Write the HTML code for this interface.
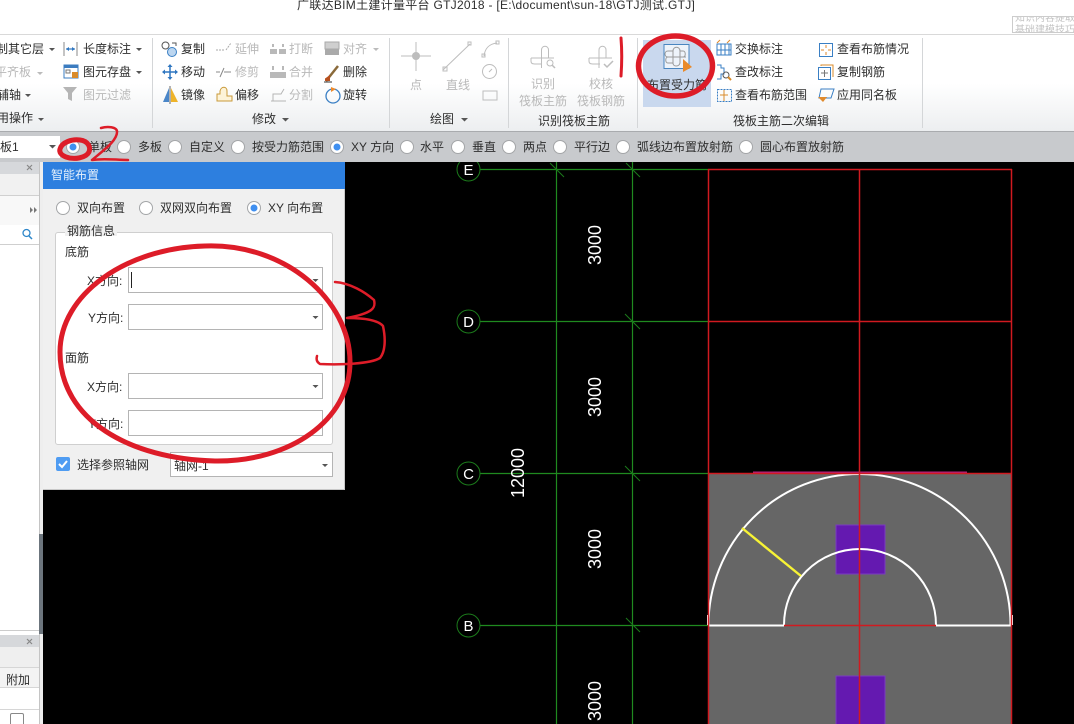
<!DOCTYPE html>
<html lang="zh"><head><meta charset="utf-8"><title>GTJ2018</title>
<style>
html,body{margin:0;padding:0;background:#fff}
#p{position:relative;width:1074px;height:724px;overflow:hidden;background:#000;font:12px/16px "Liberation Sans","Noto Sans CJK SC",sans-serif;color:#2e2e2e}
#p div{position:absolute;box-sizing:border-box}
#p span{position:absolute;white-space:nowrap;line-height:16px}
.g{color:#b9b9b9}
svg{position:absolute;left:0;top:0}
.inp{background:#fff;border:1px solid #b4b4b4}
</style></head><body><div id="p">
<div style="left:0;top:0;width:1074px;height:35px;background:#fff;border-bottom:1px solid #d9d9d9"></div>
<div style="left:0;top:35px;width:1074px;height:97px;background:linear-gradient(#fff 0,#fff 50%,#eceef0 100%)"></div>
<div style="left:0;top:131px;width:1074px;height:31px;background:#c8cacd;border-top:1px solid #a9abae"></div>
<div style="left:0;top:162px;width:39px;height:562px;background:#fff"></div>
<div style="left:39px;top:162px;width:4px;height:562px;background:#eeeeee;border-left:1px solid #c4c4c4"></div>
<div style="left:39px;top:534px;width:4px;height:100px;background:#6c757d"></div>
<div style="left:0;top:162px;width:39px;height:12px;background:#d6d8db"></div>
<div style="left:0;top:174px;width:39px;height:22px;background:#f1f1f1;border-bottom:1px solid #d0d0d0"></div>
<div style="left:0;top:196px;width:39px;height:29px;background:#f8f8f8"></div>
<div style="left:0;top:225px;width:39px;height:20px;background:#fff;border-bottom:1px solid #cfcfcf"></div>
<div style="left:0;top:630px;width:39px;height:5px;background:#fff;border-top:1px solid #ccc"></div>
<div style="left:0;top:635px;width:39px;height:12px;background:#d6d8db"></div>
<div style="left:0;top:647px;width:39px;height:21px;background:#efefef;border-bottom:1px solid #d6d6d6"></div>
<div style="left:0;top:668px;width:39px;height:20px;background:#f3f3f3;border-bottom:1px solid #d6d6d6"></div>
<div style="left:0;top:709px;width:39px;height:1px;background:#d6d6d6"></div>
<div style="left:10px;top:713px;width:14px;height:14px;background:#fff;border:1px solid #888;border-radius:2px"></div>
<span style="left:6px;top:672px">附加</span>
<div style="left:643px;top:40px;width:68px;height:67px;background:#c9d8ee"></div>
<div style="left:0;top:136px;width:60px;height:22px;background:#fff"></div>

<span style="left:297px;top:-3px;font-size:12px;letter-spacing:.29px">广联达BIM土建计量平台 GTJ2018 - [E:\document\sun-18\GTJ测试.GTJ]</span>

<span style="left:-4px;top:41px">制其它层</span><span class="g" style="left:-5px;top:64px">平齐板</span><span style="left:-3px;top:87px">辅轴</span><span style="left:-3px;top:110px">用操作</span>
<span style="left:83px;top:41px">长度标注</span><span style="left:83px;top:64px">图元存盘</span><span class="g" style="left:83px;top:87px">图元过滤</span>
<span style="left:181px;top:41px">复制</span><span style="left:181px;top:64px">移动</span><span style="left:181px;top:87px">镜像</span>
<span class="g" style="left:235px;top:41px">延伸</span><span class="g" style="left:235px;top:64px">修剪</span><span style="left:235px;top:87px">偏移</span>
<span class="g" style="left:289px;top:41px">打断</span><span class="g" style="left:289px;top:64px">合并</span><span class="g" style="left:289px;top:87px">分割</span>
<span class="g" style="left:343px;top:41px">对齐</span><span style="left:343px;top:64px">删除</span><span style="left:343px;top:87px">旋转</span>
<span style="left:252px;top:111px">修改</span>
<span class="g" style="left:410px;top:77px">点</span><span class="g" style="left:446px;top:77px">直线</span><span style="left:430px;top:111px">绘图</span>
<span class="g" style="left:531px;top:76px">识别</span><span class="g" style="left:519px;top:93px">筏板主筋</span>
<span class="g" style="left:589px;top:76px">校核</span><span class="g" style="left:577px;top:93px">筏板钢筋</span>
<span style="left:538px;top:113px">识别筏板主筋</span>
<span style="left:647px;top:77px">布置受力筋</span>
<span style="left:735px;top:41px">交换标注</span><span style="left:735px;top:64px">查改标注</span><span style="left:735px;top:87px">查看布筋范围</span>
<span style="left:837px;top:41px">查看布筋情况</span><span style="left:837px;top:64px">复制钢筋</span><span style="left:837px;top:87px">应用同名板</span>
<span style="left:733px;top:113px">筏板主筋二次编辑</span>

<span style="left:0;top:139px">板1</span>
<span style="left:88px;top:139px">单板</span><span style="left:138px;top:139px">多板</span><span style="left:189px;top:139px">自定义</span><span style="left:252px;top:139px">按受力筋范围</span><span style="left:351px;top:139px">XY 方向</span><span style="left:420px;top:139px">水平</span><span style="left:472px;top:139px">垂直</span><span style="left:523px;top:139px">两点</span><span style="left:574px;top:139px">平行边</span><span style="left:637px;top:139px">弧线边布置放射筋</span><span style="left:760px;top:139px">圆心布置放射筋</span>

<!-- CAD -->
<svg width="1074" height="724" viewBox="0 0 1074 724" fill="none">
<defs><clipPath id="cad"><rect x="43" y="162" width="1031" height="562"/></clipPath></defs>
<g clip-path="url(#cad)">
<rect x="708.500" y="473" width="303" height="251" fill="#666"/>
<rect x="836" y="525" width="49" height="49" fill="#6419b0" stroke="#7a3cc0"/>
<rect x="836" y="676" width="49" height="49" fill="#6419b0" stroke="#7a3cc0"/>
<g stroke="#1f8a1f" stroke-width="1.200">
<path d="M480 169.500H708M480 321.500H708M480 473.500H708M480 625.500H708M556.500 162V724M632.500 162V724"/>
</g>
<g stroke="#1b7a1b" stroke-width="1">
<path d="M550 163L564 177M626 163L640 177M625 314L640 329M625 466L640 481M626 618L640 632"/>
<circle cx="468.500" cy="169.500" r="11.500"/><circle cx="468.500" cy="321.500" r="11.500"/><circle cx="468.500" cy="473.500" r="11.500"/><circle cx="468.500" cy="625.500" r="11.500"/>
</g>
<path d="M753 472.500H967" stroke="#b3207d" stroke-width="2"/>
<g stroke="#fff" stroke-width="2">
<path d="M708.500 625A151 151 0 0 1 1010.500 625"/>
<path d="M784 625A76 76 0 0 1 936 625"/>
</g>
<path d="M708 625.500H784M936 625.500H1011" stroke="#fff" stroke-width="2"/>
<path d="M707.500 615V625M1012.500 615V625" stroke="#fff"/>
<path d="M742 528L801 576" stroke="#f7f335" stroke-width="2.400"/>
<g stroke="#d01a20" stroke-width="1.500">
<path d="M708.500 169V724M859.500 169V724M1011.500 169V724M708 169.500H1012M708 321.500H1012M708 473.500H1012M784 625.500H936"/>
</g>
<g fill="#fff" font-family="Liberation Sans,sans-serif" text-anchor="middle">
<text x="468.500" y="175" font-size="15">E</text><text x="468.500" y="327" font-size="15">D</text><text x="468.500" y="479" font-size="15">C</text><text x="468.500" y="631" font-size="15">B</text>
<g font-size="18">
<text transform="translate(601 245) rotate(-90)">3000</text>
<text transform="translate(601 397) rotate(-90)">3000</text>
<text transform="translate(601 549) rotate(-90)">3000</text>
<text transform="translate(601 701) rotate(-90)">3000</text>
<text transform="translate(524 473) rotate(-90)">12000</text>
</g></g></g>
</svg>

<!-- dialog -->
<div style="left:43px;top:162px;width:302px;height:328px;background:#f0f0f0;border-right:1px solid #c8c8c8;border-bottom:1px solid #c8c8c8"></div>
<div style="left:43px;top:162px;width:302px;height:27px;background:#2d7fdf"></div>
<span style="left:51px;top:167px;color:#e6f0fb">智能布置</span>
<span style="left:77px;top:200px">双向布置</span><span style="left:160px;top:200px">双网双向布置</span><span style="left:268px;top:200px">XY 向布置</span>
<div style="left:55px;top:232px;width:278px;height:213px;background:#fff;border:1px solid #cfcfcf;border-radius:3px"></div>
<div style="left:65px;top:226px;width:52px;height:10px;background:#f0f0f0"></div>
<span style="left:67px;top:223px">钢筋信息</span>
<span style="left:65px;top:244px">底筋</span><span style="left:65px;top:350px">面筋</span>
<span style="left:87px;top:273px">X方向:</span><span style="left:88px;top:310px">Y方向:</span><span style="left:87px;top:379px">X方向:</span><span style="left:88px;top:416px">Y方向:</span>
<div class="inp" style="left:128px;top:267px;width:195px;height:26px"></div>
<div class="inp" style="left:128px;top:304px;width:195px;height:26px"></div>
<div class="inp" style="left:128px;top:373px;width:195px;height:26px"></div>
<div class="inp" style="left:128px;top:410px;width:195px;height:26px"></div>
<div style="left:131px;top:272px;width:1px;height:16px;background:#222"></div>
<div style="left:56px;top:457px;width:14px;height:14px;background:#4f9cf2;border-radius:2px"></div>
<span style="left:77px;top:457px">选择参照轴网</span>
<div class="inp" style="left:170px;top:452px;width:163px;height:25px"></div>
<span style="left:174px;top:458px">轴网-1</span>

<!-- icons and vector overlay -->
<svg width="1074" height="724" viewBox="0 0 1074 724" fill="none">
<path d="M152.500 38V128M389.500 38V128M508.500 38V128M637.500 38V128M922.500 38V128" stroke="#d4d6d8"/>
<g fill="#555">
<path d="M49 48h6l-3 3zM136 48h6l-3 3zM25 94h6l-3 3zM38 118h6l-3 3zM136 71h6l-3 3zM282 118h7l-3.500 3.500zM461 118h7l-3.500 3.500zM49 145h7l-3.500 3.500z"/>
<path d="M312.500 316h6l-3 3zM312.500 385h6l-3 3zM312.500 279h6l-3 3zM322 464h6l-3 3z"/>
</g>
<path d="M37 72h6l-3 3zM373 48h6l-3 3z" fill="#bbb"/>
<g stroke="#888" stroke-width="1.200"><path d="M27 165l5 5M32 165l-5 5M27 639l5 5M32 639l-5 5"/></g>
<path d="M30 207l3 3-3 3zM34 207l3 3-3 3z" fill="#777"/>
<circle cx="26.500" cy="233" r="3.500" stroke="#2d86c9" stroke-width="1.300"/><path d="M29 236l3 3" stroke="#2d86c9" stroke-width="1.500"/>
<path d="M64 42V56M77 42V56" stroke="#888"/><path d="M66 49H75" stroke="#2f76c0" stroke-width="1.200"/><path d="M66 49l3-2v4zM75 49l-3-2v4z" fill="#2f76c0"/>
<rect x="64" y="65" width="14" height="13" stroke="#3b7cc0" fill="#fff"/><rect x="64" y="65" width="14" height="3" fill="#3b7cc0"/><rect x="66" y="70" width="4" height="3" stroke="#777"/><rect x="72" y="72" width="6" height="6" fill="#d98b2b"/>
<path d="M63 87H77L72 93V101L68 99V93Z" fill="#b5b5b5"/>
<circle cx="165.500" cy="45.500" r="3.500" stroke="#555"/><circle cx="172" cy="52" r="4.500" stroke="#3a7fc4" fill="#bcd6f0"/><path d="M172 43h4v3" stroke="#555"/>
<path d="M170 65v14M163 72h14" stroke="#2f76c0" stroke-width="1.500"/><path d="M170 64l-2.500 3h5zM170 80l-2.500-3h5zM162 72l3-2.500v5zM178 72l-3-2.500v5z" fill="#2f76c0"/>
<path d="M169 88L163 102H169Z" fill="#4a86c8"/><path d="M171 88L178 102H171Z" fill="#eeb32a"/><path d="M170 86V104" stroke="#666"/>
<path d="M216 50h8M226 50l5-7" stroke="#aaa" stroke-dasharray="2 1"/>
<path d="M216 72h4M224 72h7M220 77l4-9" stroke="#888"/>
<path d="M217 101h15v-5h-5v-5c0-5-6-5-7 0v3h-3z" stroke="#c99a3a" fill="#fdf3d8"/>
<g fill="#b9b9b9"><rect x="270" y="49" width="7" height="5"/><rect x="279" y="49" width="7" height="5"/><rect x="270" y="72" width="16" height="6"/><path d="M272 44h2v3h-2zM282 44h2v3h-2zM272 66h2v4h-2zM282 66h2v4h-2z"/></g>
<path d="M271 101h15M273 101v-7h8l3-5" stroke="#b5b5b5"/>
<rect x="325" y="42" width="14" height="7" fill="#cfcfcf" stroke="#aaa"/><rect x="325" y="49" width="14" height="6" fill="#aaa"/>
<path d="M326 81l12-15" stroke="#8a6a3a" stroke-width="2.500"/><path d="M329 77l-3 2v1h3z" fill="#b8501e" stroke="#b8501e" stroke-width="2"/><path d="M324 82h8" stroke="#333"/>
<circle cx="333" cy="96" r="7" stroke="#3a7fc4" stroke-width="1.300"/><path d="M331 87l5 2-5 3z" fill="#ef8b2c"/>
<g stroke="#bdbdbd">
<path d="M416 42V71M401 56H431M443 70L470 44"/><rect x="443" y="67" width="4" height="4"/><rect x="468" y="42" width="3" height="3"/>
<path d="M484 56c1-8 5-12 13-13"/><rect x="482" y="54" width="3" height="3"/><rect x="496" y="41" width="3" height="3"/>
<circle cx="489.500" cy="71.500" r="7"/><path d="M489 72l3-3"/>
<rect x="483" y="91" width="14" height="9"/>
<path d="M541.500 68V50c0-5 7-5 7 0v8M531 58H554M531 58v3c0 3 2 3 5 3h6"/>
<path d="M599 68V50c0-5 7-5 7 0v8M589 58H612M589 58v3c0 3 2 3 5 3h6"/>
<circle cx="550" cy="63" r="3"/><path d="M552 65l3 3M604 64l3 3 6-6" stroke-width="1.500"/>
</g>
<circle cx="416" cy="56" r="4" fill="#bdbdbd"/>
<rect x="664" y="44.500" width="25" height="24" fill="#eef3fa" stroke="#4a86c0"/>
<path d="M673 64V51c0-5 7-5 7 0v6M668 57H686M668 57c-4 0-4-6 0-6h5M668 57c-3 0-3 6 0 6h5c0 4 6 4 7 0v-6h3c3 0 3-6 0-6h-3" stroke="#9a9a9a" fill="none"/>
<path d="M683 59L692 67L683 72Z" fill="#e98a2a"/>
<path d="M717 50h14v-6h-14zM717 50h14v5h-14zM721 44v11M725 44v11M729 44v11" stroke="#3a7fc4"/><path d="M717 43l3-3M727 43l3-3" stroke="#e08a2c"/>
<path d="M717 65h4v3h3v6h-3v5h-4" stroke="#3a7fc4"/><circle cx="726" cy="75" r="3" stroke="#555"/><path d="M728 77l3 3" stroke="#d98b2b" stroke-width="2"/>
<rect x="717.500" y="89.500" width="14" height="12" stroke="#3a7fc4" stroke-dasharray="2 1"/><path d="M724 90v11M720 95h8" stroke="#d98b2b"/>
<rect x="819.500" y="43.500" width="13" height="13" stroke="#3a7fc4"/><path d="M826 45v3M826 52v3M821 50h3M828 50h3" stroke="#e08a2c"/>
<rect x="818.500" y="67.500" width="12" height="12" stroke="#3a7fc4"/><path d="M821 66v-1h12v12" stroke="#d98b2b"/><path d="M824.500 70v7M821 73h7" stroke="#777"/>
<path d="M821 89h13l-3 9h-12z" stroke="#3a7fc4"/><path d="M818 97h9l-4 5z" fill="#e08a2c"/>
<g fill="#fff" stroke="#a4a6a8">
<circle cx="73" cy="147" r="6.500"/><circle cx="124" cy="147" r="6.500"/><circle cx="175" cy="147" r="6.500"/><circle cx="238" cy="147" r="6.500"/><circle cx="337" cy="147" r="6.500"/><circle cx="407" cy="147" r="6.500"/><circle cx="458" cy="147" r="6.500"/><circle cx="509" cy="147" r="6.500"/><circle cx="560" cy="147" r="6.500"/><circle cx="623" cy="147" r="6.500"/><circle cx="746" cy="147" r="6.500"/>
<circle cx="63" cy="208" r="6.500"/><circle cx="146" cy="208" r="6.500"/><circle cx="254" cy="208" r="6.500"/>
</g>
<g fill="#3f8ff0"><circle cx="73" cy="147" r="3.500"/><circle cx="337" cy="147" r="3.500"/><circle cx="254" cy="208" r="3.500"/></g>
<path d="M59 464l3 3 5-6" stroke="#fff" stroke-width="2"/>
<g stroke="#dd1c28" stroke-linecap="round" stroke-linejoin="round">
<ellipse cx="675.500" cy="66" rx="37" ry="30" stroke-width="5.500"/>
<path d="M621 38C622 50 622 62 621 76" stroke-width="3"/>
<path d="M60 149C62 142 72 139 80 140C88 141 91 147 89 152C86 158 74 160 66 157C61 155 59 152 60 149Z" stroke-width="5"/>
<path d="M101 128C108 126 116 127 117 131C118 140 104 150 92 160C104 158 116 160 128 160" stroke-width="2.500"/>
<path d="M205 246C285 243 350 300 350 362C350 420 290 462 215 461C130 459 60 420 60 352C60 295 125 248 205 246Z" stroke-width="5"/>
<path d="M335 282C350 283 365 292 374 300C376 308 373 313 347 318C365 318 378 320 383 326C386 340 385 352 380 358C370 364 340 365 320 364C317 362 316 360 317 356" stroke-width="2.500"/>
</g>
</svg>
<div style="left:1012px;top:16px;width:62px;height:17px;border:1px solid #ccc;border-right:none;overflow:hidden;color:#c4c4c4;font-size:10px"><span style="left:2px;top:-6px">知识内容提取</span><span style="left:2px;top:6px">基础建模技巧</span></div>
</div></body></html>
